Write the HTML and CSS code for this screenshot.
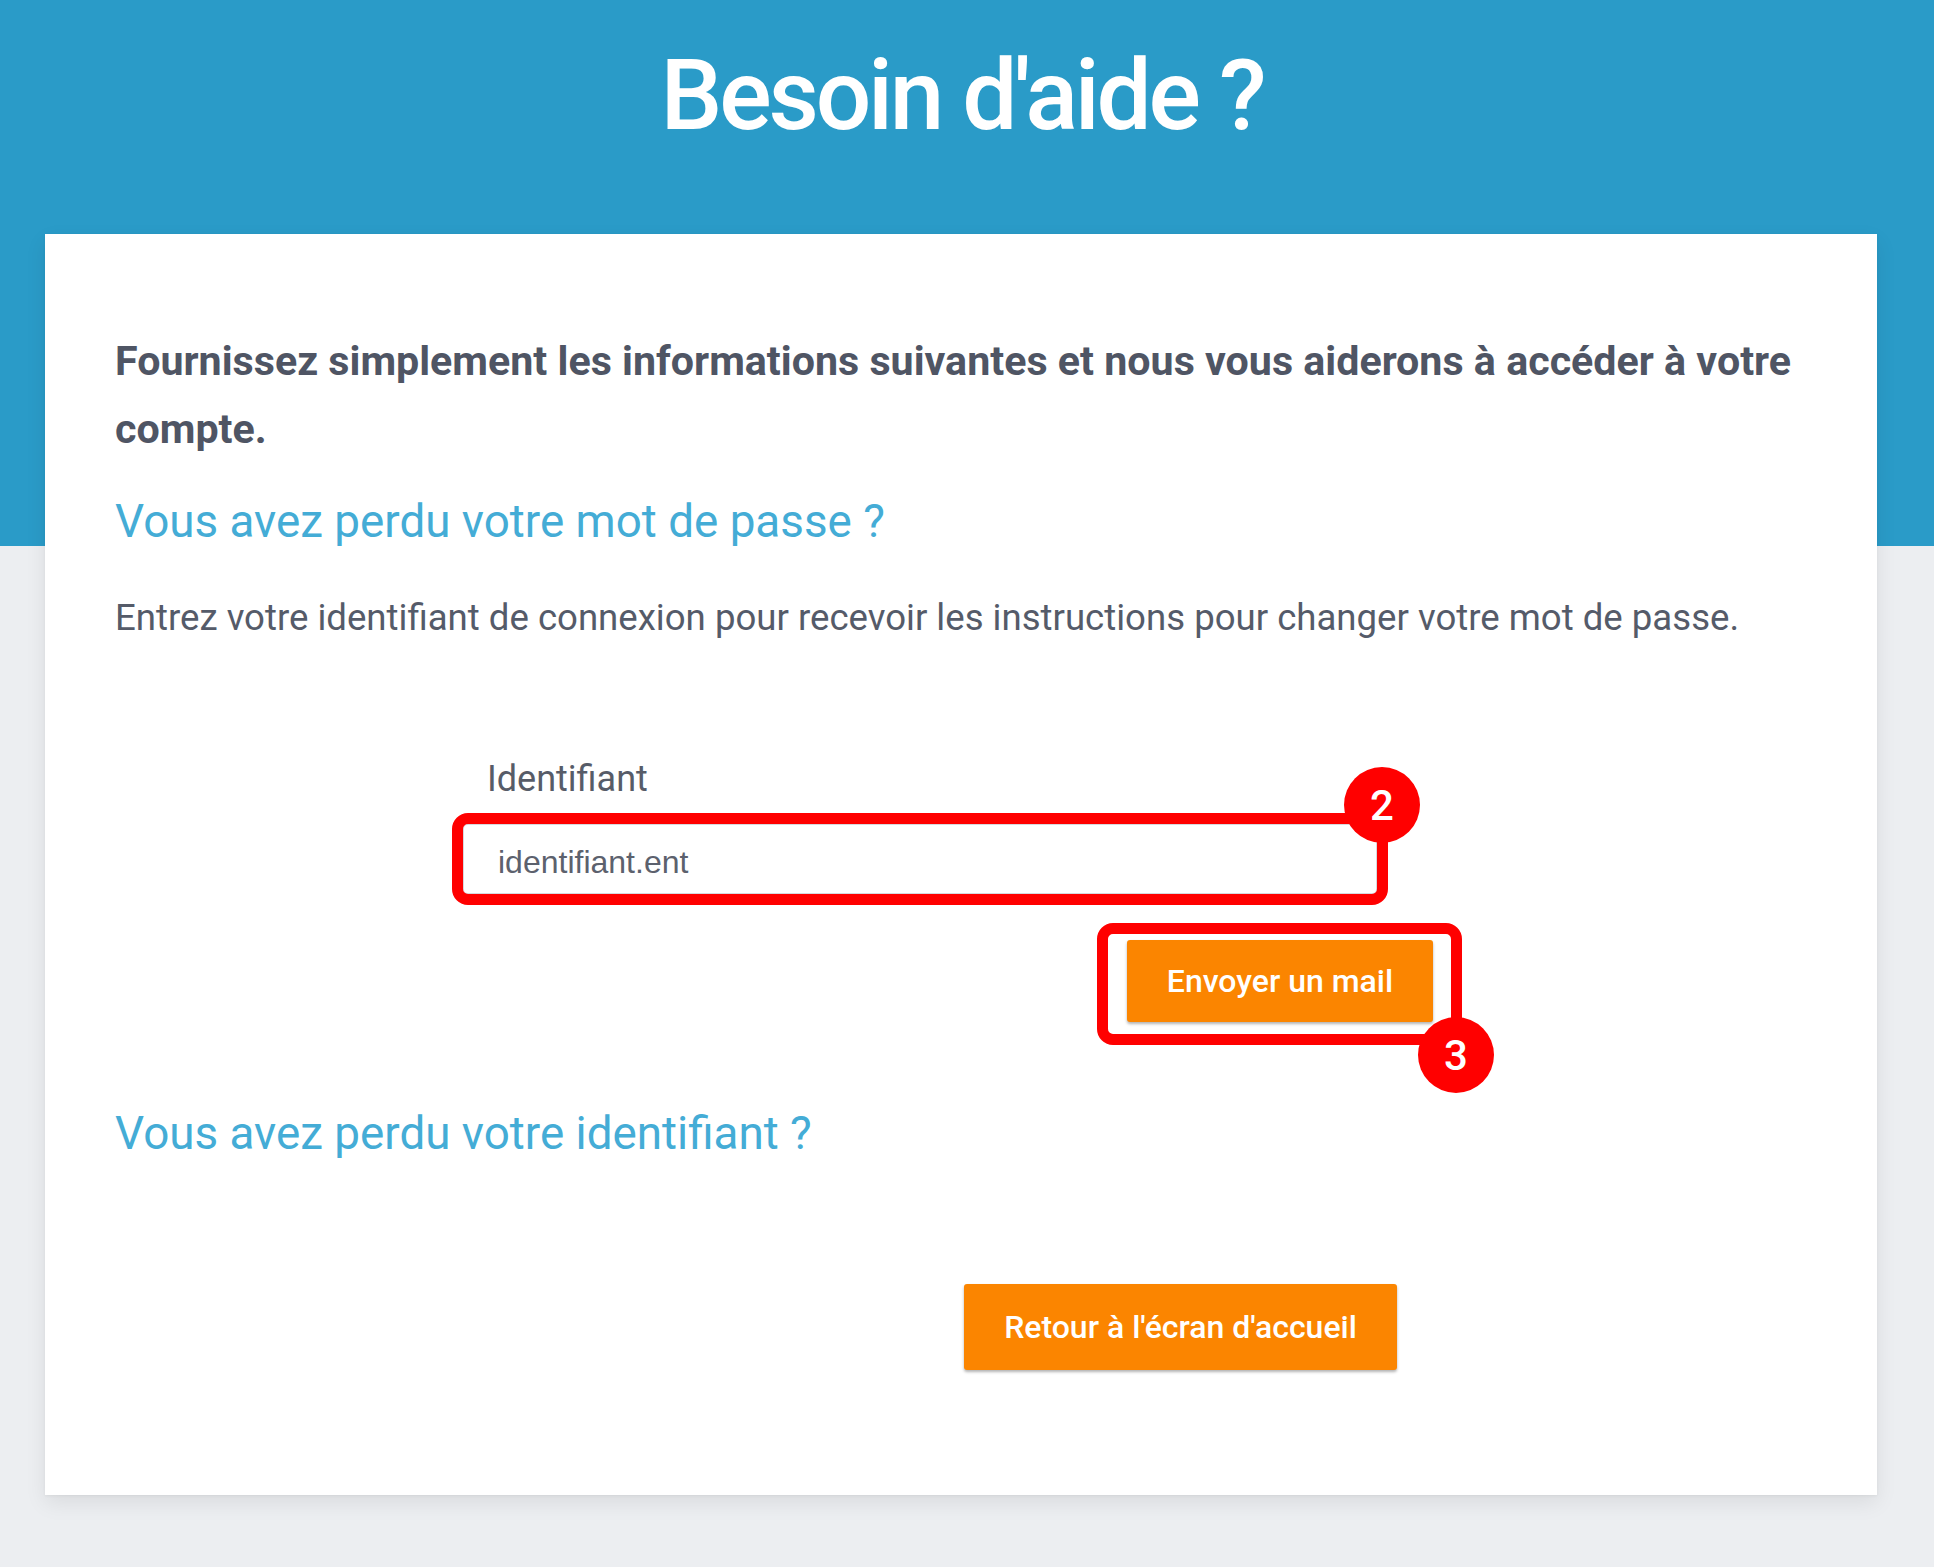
FILE: index.html
```html
<!DOCTYPE html>
<html lang="fr">
<head>
<meta charset="utf-8">
<title>Besoin d'aide ?</title>
<link rel="stylesheet" href="styles.css">
</head>
<body>
<div class="page">
  <header class="hero">
    <h1 class="hero-title">Besoin d'aide ?</h1>
  </header>
  <main class="card">
    <p class="intro">Fournissez simplement les informations suivantes et nous vous aiderons à accéder à votre compte.</p>
    <h2 class="section-title">Vous avez perdu votre mot de passe ?</h2>
    <p class="desc">Entrez votre identifiant de connexion pour recevoir les instructions pour changer votre mot de passe.</p>
    <form class="form">
      <label class="label" for="login">Identifiant</label>
      <div class="field">
        <input class="input" id="login" type="text" value="identifiant.ent">
        <span class="mark mark-input"></span>
        <span class="badge badge-2">2</span>
      </div>
      <div class="actions">
        <div class="btn-wrap">
          <button type="button" class="btn btn-send">Envoyer un mail</button>
          <span class="mark mark-btn"></span>
          <span class="badge badge-3">3</span>
        </div>
      </div>
    </form>
    <h2 class="section-title section-title-2">Vous avez perdu votre identifiant ?</h2>
    <div class="back-row">
      <button type="button" class="btn btn-back">Retour à l'écran d'accueil</button>
    </div>
  </main>
</div>
</body>
</html>
```
FILE: styles.css
```css
* { box-sizing: border-box; }
html, body { margin: 0; padding: 0; }
body {
  font-family: Roboto, "Liberation Sans", Arial, sans-serif;
  background: #eceef1;
}
.page {
  min-height: 1567px;
  background: linear-gradient(#2a9bc8 0, #2a9bc8 546px, #eceef1 546px);
  padding-top: 36px;
  padding-bottom: 70px;
}
.hero { height: 120px; margin-bottom: 78px; display: flex; justify-content: center; }
.hero-title {
  margin: 0;
  font-size: 98px;
  line-height: 120px;
  font-weight: 500;
  letter-spacing: -3.2px;
  color: #ffffff;
  padding-right: 10px;
}
.card {
  margin-left: 45px;
  width: 1832px;
  background: #fff;
  box-shadow: 0 8px 20px rgba(0, 0, 0, 0.08), 0 1px 3px rgba(0, 0, 0, 0.05);
  padding: 93px 70px 125px 70px;
}
.intro {
  margin: 0;
  font-size: 41.2px;
  line-height: 68px;
  font-weight: 700;
  color: #4f5564;
}
.section-title {
  margin: 29px 0 0 0;
  font-size: 45.8px;
  line-height: 60px;
  font-weight: 400;
  color: #44acd6;
}
.section-title-2 { margin-top: 82px; }
.desc {
  margin: 41px 0 0 0;
  font-size: 36.6px;
  line-height: 50px;
  color: #555b69;
}
.form {
  margin: 114px 0 0 348px;
  width: 976px;
}
.label {
  display: block;
  margin-left: 24px;
  font-size: 36px;
  line-height: 44px;
  color: #575c68;
}
.field {
  position: relative;
  margin-top: 23px;
  width: 914px;
  height: 70px;
}
.input {
  display: block;
  width: 100%;
  height: 100%;
  border: 1px solid #d6d9de;
  border-radius: 4px;
  padding: 7px 0 0 34px;
  font-family: "Liberation Sans", Arial, sans-serif;
  font-size: 32px;
  color: #5c616d;
  background: #fff;
  outline: none;
}
.mark {
  position: absolute;
  border: 11px solid #ff0000;
  border-radius: 16px;
  pointer-events: none;
}
.mark-input { left: -11px; top: -11px; right: -11px; bottom: -11px; }
.badge {
  position: absolute;
  width: 76px;
  height: 76px;
  border-radius: 50%;
  background: #ff0000;
  color: #fff;
  font-family: Roboto, "Liberation Sans", Arial, sans-serif;
  font-size: 42px;
  font-weight: 500;
  display: flex;
  align-items: center;
  justify-content: center;
}
.badge-2 { right: -43px; top: -57px; }
.actions {
  margin-top: 46px;
  display: flex;
  justify-content: flex-end;
  padding-right: 6px;
}
.btn-wrap { position: relative; }
.btn {
  border: none;
  border-radius: 3px;
  background: #fb8500;
  color: #fff;
  font-family: Roboto, "Liberation Sans", Arial, sans-serif;
  font-size: 32px;
  font-weight: 500;
  box-shadow: 0 2px 3px rgba(0, 0, 0, 0.3);
  cursor: pointer;
}
.btn-send { display: block; width: 306px; height: 82px; }
.mark-btn { left: -30px; top: -17px; right: -29px; bottom: -23px; }
.badge-3 { right: -61px; bottom: -71px; }
.back-row {
  margin-top: 120px;
  padding-left: 849px;
}
.btn-back { width: 433px; height: 86px; }
```
